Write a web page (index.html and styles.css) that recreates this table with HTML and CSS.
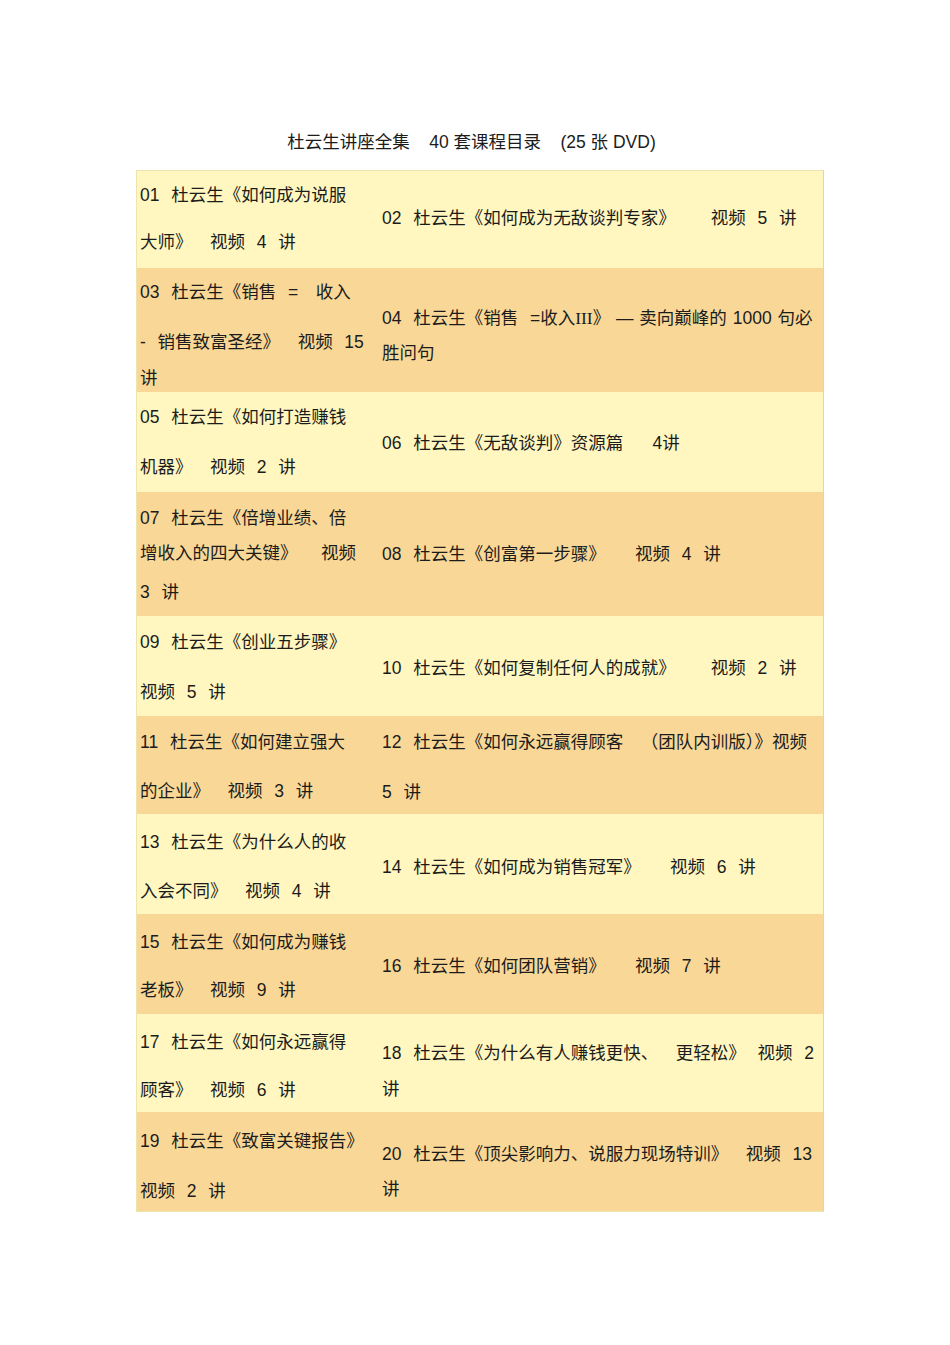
FILE: index.html
```html
<!DOCTYPE html>
<html lang="zh-CN">
<head>
<meta charset="utf-8">
<title>杜云生讲座全集 40套课程目录</title>
<link rel="stylesheet" href="styles.css">
</head>
<body>
<div class="page">
  <h1 class="title">杜云生讲座全集    40 套课程目录    (25 张 DVD)</h1>
  <div class="catalog">
    <div class="row light h98">
      <div class="cell left pt14"><div class="ln">01  杜云生《如何成为说服</div><div class="ln g27">大师》   视频  4  讲</div></div>
      <div class="cell right pt37"><div class="ln">02  杜云生《如何成为无敌谈判专家》      视频  5  讲</div></div>
    </div>
    <div class="row tan h124">
      <div class="cell left pt14"><div class="ln">03  杜云生《销售  =   收入</div><div class="ln g30">-  销售致富圣经》   视频  15</div><div class="ln g16">讲</div></div>
      <div class="cell right pt40"><div class="ln">04  杜云生《销售  =收入<span class="roman">III</span>》 — 卖向巅峰的 1000 句必</div><div class="ln g15">胜问句</div></div>
    </div>
    <div class="row light h100">
      <div class="cell left pt15"><div class="ln">05  杜云生《如何打造赚钱</div><div class="ln g30">机器》   视频  2  讲</div></div>
      <div class="cell right pt41"><div class="ln">06  杜云生《无敌谈判》资源篇     4讲</div></div>
    </div>
    <div class="row tan h124">
      <div class="cell left pt16"><div class="ln">07  杜云生《倍增业绩、倍</div><div class="ln g15">增收入的四大关键》    视频</div><div class="ln g19">3  讲</div></div>
      <div class="cell right pt52"><div class="ln">08  杜云生《创富第一步骤》     视频  4  讲</div></div>
    </div>
    <div class="row light h100">
      <div class="cell left pt16"><div class="ln">09  杜云生《创业五步骤》</div><div class="ln g30">视频  5  讲</div></div>
      <div class="cell right pt42"><div class="ln">10  杜云生《如何复制任何人的成就》      视频  2  讲</div></div>
    </div>
    <div class="row tan h98">
      <div class="cell left pt16"><div class="ln">11  杜云生《如何建立强大</div><div class="ln g29">的企业》   视频  3  讲</div></div>
      <div class="cell right pt16"><div class="ln">12  杜云生《如何永远赢得顾客   （团队内训版）》视频</div><div class="ln g30">5  讲</div></div>
    </div>
    <div class="row light h100">
      <div class="cell left pt18"><div class="ln">13  杜云生《为什么人的收</div><div class="ln g29">入会不同》   视频  4  讲</div></div>
      <div class="cell right pt43"><div class="ln">14  杜云生《如何成为销售冠军》     视频  6  讲</div></div>
    </div>
    <div class="row tan h100">
      <div class="cell left pt18"><div class="ln">15  杜云生《如何成为赚钱</div><div class="ln g28">老板》   视频  9  讲</div></div>
      <div class="cell right pt42"><div class="ln">16  杜云生《如何团队营销》     视频  7  讲</div></div>
    </div>
    <div class="row light h98">
      <div class="cell left pt18"><div class="ln">17  杜云生《如何永远赢得</div><div class="ln g28">顾客》   视频  6  讲</div></div>
      <div class="cell right pt29"><div class="ln">18  杜云生《为什么有人赚钱更快、   更轻松》  视频  2</div><div class="ln g16">讲</div></div>
    </div>
    <div class="row tan h100">
      <div class="cell left pt19"><div class="ln">19  杜云生《致富关键报告》</div><div class="ln g30">视频  2  讲</div></div>
      <div class="cell right pt32"><div class="ln">20  杜云生《顶尖影响力、说服力现场特训》   视频  13</div><div class="ln g15">讲</div></div>
    </div>
  </div>
</div>
</body>
</html>
```
FILE: styles.css
```css
html, body {
  margin: 0;
  padding: 0;
  background: #ffffff;
}

body {
  font-family: "Liberation Sans", "Noto Sans CJK SC", sans-serif;
  color: #1c1c1c;
  font-size: 17.5px;
}

.page {
  width: 688px;
  margin-left: 136px;
  padding-top: 130px;
}

.title {
  margin: 0 0 16px 0;
  padding-right: 17px;
  font-size: 17.5px;
  font-weight: normal;
  line-height: 24px;
  height: 24px;
  text-align: center;
  white-space: pre;
}

.catalog {
  display: flex;
  flex-direction: column;
  border: 1px solid #efe4ae;
  border-right-color: #e9d594;
}

.row {
  display: grid;
  grid-template-columns: 240px 446px;
}

.light { background: #fff7bf; }
.tan { background: #f9d796; }

.h98 { height: 98px; }
.h100 { height: 100px; }
.h124 { height: 124px; }

.row:first-child.h98 { height: 97px; }
.row:last-child.h100 { height: 99px; }

.cell {
  display: flex;
  flex-direction: column;
  box-sizing: border-box;
}

.left { padding-left: 3px; }
.right { padding-left: 5px; }

.ln {
  line-height: 20px;
  height: 20px;
  white-space: pre;
  word-spacing: 1px;
}

.roman {
  font-family: "Liberation Serif", serif;
}

.pt14 { padding-top: 14px; }
.pt15 { padding-top: 15px; }
.pt16 { padding-top: 16px; }
.pt18 { padding-top: 18px; }
.pt19 { padding-top: 19px; }
.pt29 { padding-top: 29px; }
.pt32 { padding-top: 32px; }
.pt37 { padding-top: 37px; }
.pt40 { padding-top: 40px; }
.pt41 { padding-top: 41px; }
.pt42 { padding-top: 42px; }
.pt43 { padding-top: 43px; }
.pt52 { padding-top: 52px; }

.g15 { margin-top: 15px; }
.g16 { margin-top: 16px; }
.g19 { margin-top: 19px; }
.g27 { margin-top: 27px; }
.g28 { margin-top: 28px; }
.g29 { margin-top: 29px; }
.g30 { margin-top: 30px; }
```
